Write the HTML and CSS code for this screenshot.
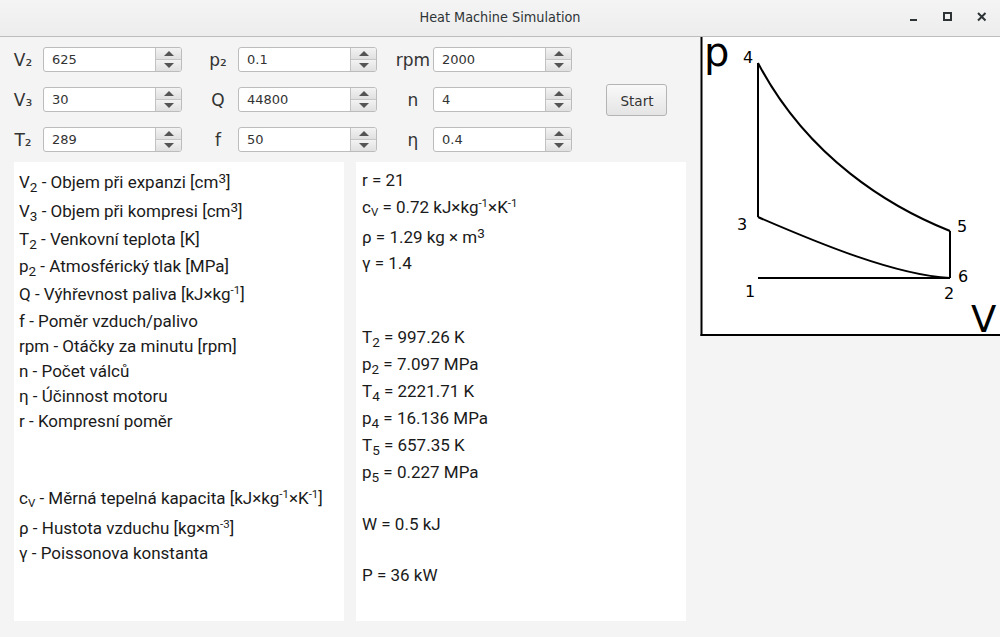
FILE: index.html
```html
<!DOCTYPE html>
<html lang="cs">
<head>
<meta charset="utf-8">
<title>Heat Machine Simulation</title>
<link rel="stylesheet" href="styles.css">
</head>
<body>
<div class="window">
  <header class="titlebar">
    <div class="title">Heat Machine Simulation</div>
    <div class="wm-buttons">
      <span class="wm-btn"><svg width="12" height="12" viewBox="0 0 12 12"><rect x="2" y="8" width="7" height="2" fill="#2e3436"/></svg></span>
      <span class="wm-btn"><svg width="12" height="12" viewBox="0 0 12 12"><rect x="2" y="2" width="7" height="7" fill="none" stroke="#2e3436" stroke-width="2"/></svg></span>
      <span class="wm-btn"><svg width="12" height="12" viewBox="0 0 12 12"><path d="M2 2 L9.5 9.5 M9.5 2 L2 9.5" stroke="#2e3436" stroke-width="2"/></svg></span>
    </div>
  </header>
  <main class="content">
    <section class="left">
      <div class="controls">
        <div class="row">
          <div class="group"><span class="lbl">V₂</span><div class="spinner"><span class="val">625</span><div class="arrows"><span class="arr up"></span><span class="arr down"></span></div></div></div>
          <div class="group"><span class="lbl">p₂</span><div class="spinner"><span class="val">0.1</span><div class="arrows"><span class="arr up"></span><span class="arr down"></span></div></div></div>
          <div class="group"><span class="lbl">rpm</span><div class="spinner"><span class="val">2000</span><div class="arrows"><span class="arr up"></span><span class="arr down"></span></div></div></div>
        </div>
        <div class="row">
          <div class="group"><span class="lbl">V₃</span><div class="spinner"><span class="val">30</span><div class="arrows"><span class="arr up"></span><span class="arr down"></span></div></div></div>
          <div class="group"><span class="lbl">Q</span><div class="spinner"><span class="val">44800</span><div class="arrows"><span class="arr up"></span><span class="arr down"></span></div></div></div>
          <div class="group"><span class="lbl">n</span><div class="spinner"><span class="val">4</span><div class="arrows"><span class="arr up"></span><span class="arr down"></span></div></div></div>
          <button class="start">Start</button>
        </div>
        <div class="row">
          <div class="group"><span class="lbl">T₂</span><div class="spinner"><span class="val">289</span><div class="arrows"><span class="arr up"></span><span class="arr down"></span></div></div></div>
          <div class="group"><span class="lbl">f</span><div class="spinner"><span class="val">50</span><div class="arrows"><span class="arr up"></span><span class="arr down"></span></div></div></div>
          <div class="group"><span class="lbl">η</span><div class="spinner"><span class="val">0.4</span><div class="arrows"><span class="arr up"></span><span class="arr down"></span></div></div></div>
        </div>
      </div>
      <div class="panels">
        <div class="panel legend">
          <div class="line">V<sub>2</sub> - Objem při expanzi [cm<sup class="big">3</sup>]</div>
          <div class="line mt4">V<sub>3</sub> - Objem při kompresi [cm<sup class="big">3</sup>]</div>
          <div class="line mt3">T<sub>2</sub> - Venkovní teplota [K]</div>
          <div class="line mt2">p<sub>2</sub> - Atmosférický tlak [MPa]</div>
          <div class="line mt3">Q - Výhřevnost paliva [kJ×kg<sup>-1</sup>]</div>
          <div class="line mt2">f - Poměr vzduch/palivo</div>
          <div class="line">rpm - Otáčky za minutu [rpm]</div>
          <div class="line">n - Počet válců</div>
          <div class="line">η - Účinnost motoru</div>
          <div class="line">r - Kompresní poměr</div>
          <div class="line mt52">c<sub class="small">V</sub> - Měrná tepelná kapacita [kJ×kg<sup>-1</sup>×K<sup>-1</sup>]</div>
          <div class="line mt5">ρ - Hustota vzduchu [kg×m<sup>-3</sup>]</div>
          <div class="line">γ - Poissonova konstanta</div>
        </div>
        <div class="panel results">
          <div class="line">r = 21</div>
          <div class="line mt2">c<sub class="small">V</sub> = 0.72 kJ×kg<sup>-1</sup>×K<sup>-1</sup></div>
          <div class="line mt5">ρ = 1.29 kg × m<sup class="big">3</sup></div>
          <div class="line mt1">γ = 1.4</div>
          <div class="line mt49">T<sub>2</sub> = 997.26 K</div>
          <div class="line mt2">p<sub>2</sub> = 7.097 MPa</div>
          <div class="line mt2">T<sub>4</sub> = 2221.71 K</div>
          <div class="line mt2">p<sub>4</sub> = 16.136 MPa</div>
          <div class="line mt2">T<sub>5</sub> = 657.35 K</div>
          <div class="line mt2">p<sub>5</sub> = 0.227 MPa</div>
          <div class="line mt27">W = 0.5 kJ</div>
          <div class="line mt26">P = 36 kW</div>
        </div>
      </div>
    </section>
    <section class="graph">
      <svg class="pv" width="300" height="300" viewBox="0 0 300 300">
        <rect x="2" y="0" width="298" height="297" fill="#ffffff"/>
        <line x1="1.5" y1="0" x2="1.5" y2="299" stroke="#000" stroke-width="2"/>
        <line x1="0.5" y1="298" x2="300" y2="298" stroke="#000" stroke-width="2"/>
        <g fill="none" stroke="#000" stroke-width="2">
          <line x1="58" y1="26" x2="58" y2="180"/>
          <path d="M58 26 C108 121 190 170 250 194"/>
          <line x1="250" y1="194" x2="250" y2="241"/>
          <line x1="58" y1="241" x2="250" y2="241"/>
          <path d="M58 180 C118 206 195 238 250 241"/>
        </g>
        <g class="num" text-anchor="middle">
          <text x="48" y="26">4</text>
          <text x="42" y="193">3</text>
          <text x="262" y="195">5</text>
          <text x="263" y="245">6</text>
          <text x="50" y="260">1</text>
          <text x="249" y="262">2</text>
        </g>
        <text class="axis" x="4" y="29">p</text>
        <text class="axis v" x="271" y="295">V</text>
      </svg>
    </section>
  </main>
</div>
</body>
</html>
```

FILE: styles.css
```css
* { box-sizing: border-box; }
html, body {
  margin: 0;
  padding: 0;
}
body {
  width: 1000px;
  height: 637px;
  overflow: hidden;
  background: #f4f4f4;
  font-family: "DejaVu Sans", sans-serif;
}
.window {
  width: 1000px;
  height: 637px;
  display: flex;
  flex-direction: column;
}
.titlebar {
  height: 37px;
  flex: none;
  background: linear-gradient(#f4f4f4, #ededed);
  border-bottom: 1px solid #bdbdbd;
  display: flex;
  align-items: center;
  justify-content: center;
  position: relative;
}
.title {
  font-family: "DejaVu Sans Condensed", "DejaVu Sans", sans-serif;
  font-stretch: condensed;
  font-size: 14.3px;
  color: #2e3436;
  padding-bottom: 3px;
}
.wm-buttons {
  position: absolute;
  right: 12px;
  top: 11px;
  display: flex;
  gap: 22px;
}
.wm-btn {
  display: block;
  width: 12px;
  height: 12px;
}
.wm-btn svg { display: block; }

.content {
  flex: 1;
  display: flex;
}
.left {
  width: 700px;
  display: flex;
  flex-direction: column;
}
.controls {
  padding: 10px 0 0 3px;
  display: flex;
  flex-direction: column;
  gap: 15px;
}
.row {
  display: flex;
  align-items: center;
  height: 25px;
  gap: 16px;
}
.group {
  display: flex;
  align-items: center;
}
.lbl {
  width: 40px;
  text-align: center;
  font-size: 17px;
  color: #333;
}
.spinner {
  width: 139px;
  height: 25px;
  display: flex;
  background: #fff;
  border: 1px solid #bcbcbc;
  border-radius: 3px;
  overflow: hidden;
}
.val {
  flex: 1;
  font-size: 13px;
  color: #333;
  line-height: 23px;
  padding-left: 8px;
}
.arrows {
  width: 26px;
  display: flex;
  flex-direction: column;
  border-left: 1px solid #c2c2c2;
}
.arr {
  flex: 1;
  display: flex;
  align-items: center;
  justify-content: center;
  background: linear-gradient(#f3f3f3, #e0e0e0);
}
.arr.up { border-bottom: 1px solid #c6c6c6; }
.arr::before {
  content: "";
  width: 0;
  height: 0;
  border-left: 5px solid transparent;
  border-right: 5px solid transparent;
}
.arr.up::before { border-bottom: 5px solid #545454; }
.arr.down::before { border-top: 5px solid #545454; }

.start {
  margin-left: 18px;
  width: 61px;
  height: 32px;
  border: 1px solid #b4b4b4;
  border-radius: 3px;
  background: linear-gradient(#f9f9f9, #e4e4e4);
  font-family: "DejaVu Sans", sans-serif;
  font-size: 13.5px;
  color: #333;
  padding: 0 0 0 1px;
  line-height: 32px;
}

.panels {
  margin-top: 10px;
  padding-left: 14px;
  display: flex;
  gap: 12px;
}
.panel {
  width: 330px;
  height: 459px;
  background: #fff;
  font-family: Roboto, "Noto Sans", sans-serif;
  font-size: 17px;
  color: #1a1a1a;
  padding-left: 5px;
}
.legend { padding-top: 8px; }
.results { padding-top: 6px; padding-left: 6px; }
.line {
  height: 25px;
  line-height: 25px;
  white-space: nowrap;
}
sub {
  font-size: 13.5px;
  line-height: 0;
  vertical-align: -4px;
}
sub.small {
  font-size: 11.5px;
  vertical-align: -3px;
}
sup {
  font-size: 11.5px;
  line-height: 0;
  vertical-align: 6px;
}
sup.big {
  font-size: 13.5px;
  vertical-align: 5px;
}
.mt1 { margin-top: 1px; }
.mt2 { margin-top: 2px; }
.mt3 { margin-top: 3px; }
.mt4 { margin-top: 4px; }
.mt5 { margin-top: 5px; }
.mt26 { margin-top: 26px; }
.mt27 { margin-top: 27px; }
.mt49 { margin-top: 49px; }
.mt52 { margin-top: 52px; }

.graph {
  width: 300px;
  height: 300px;
}
.pv { display: block; }
.num {
  font-family: "DejaVu Sans", sans-serif;
  font-size: 16px;
  fill: #000;
}
.axis {
  font-family: "DejaVu Sans", sans-serif;
  font-size: 40px;
  fill: #000;
}
.axis.v { font-size: 37px; }
```
